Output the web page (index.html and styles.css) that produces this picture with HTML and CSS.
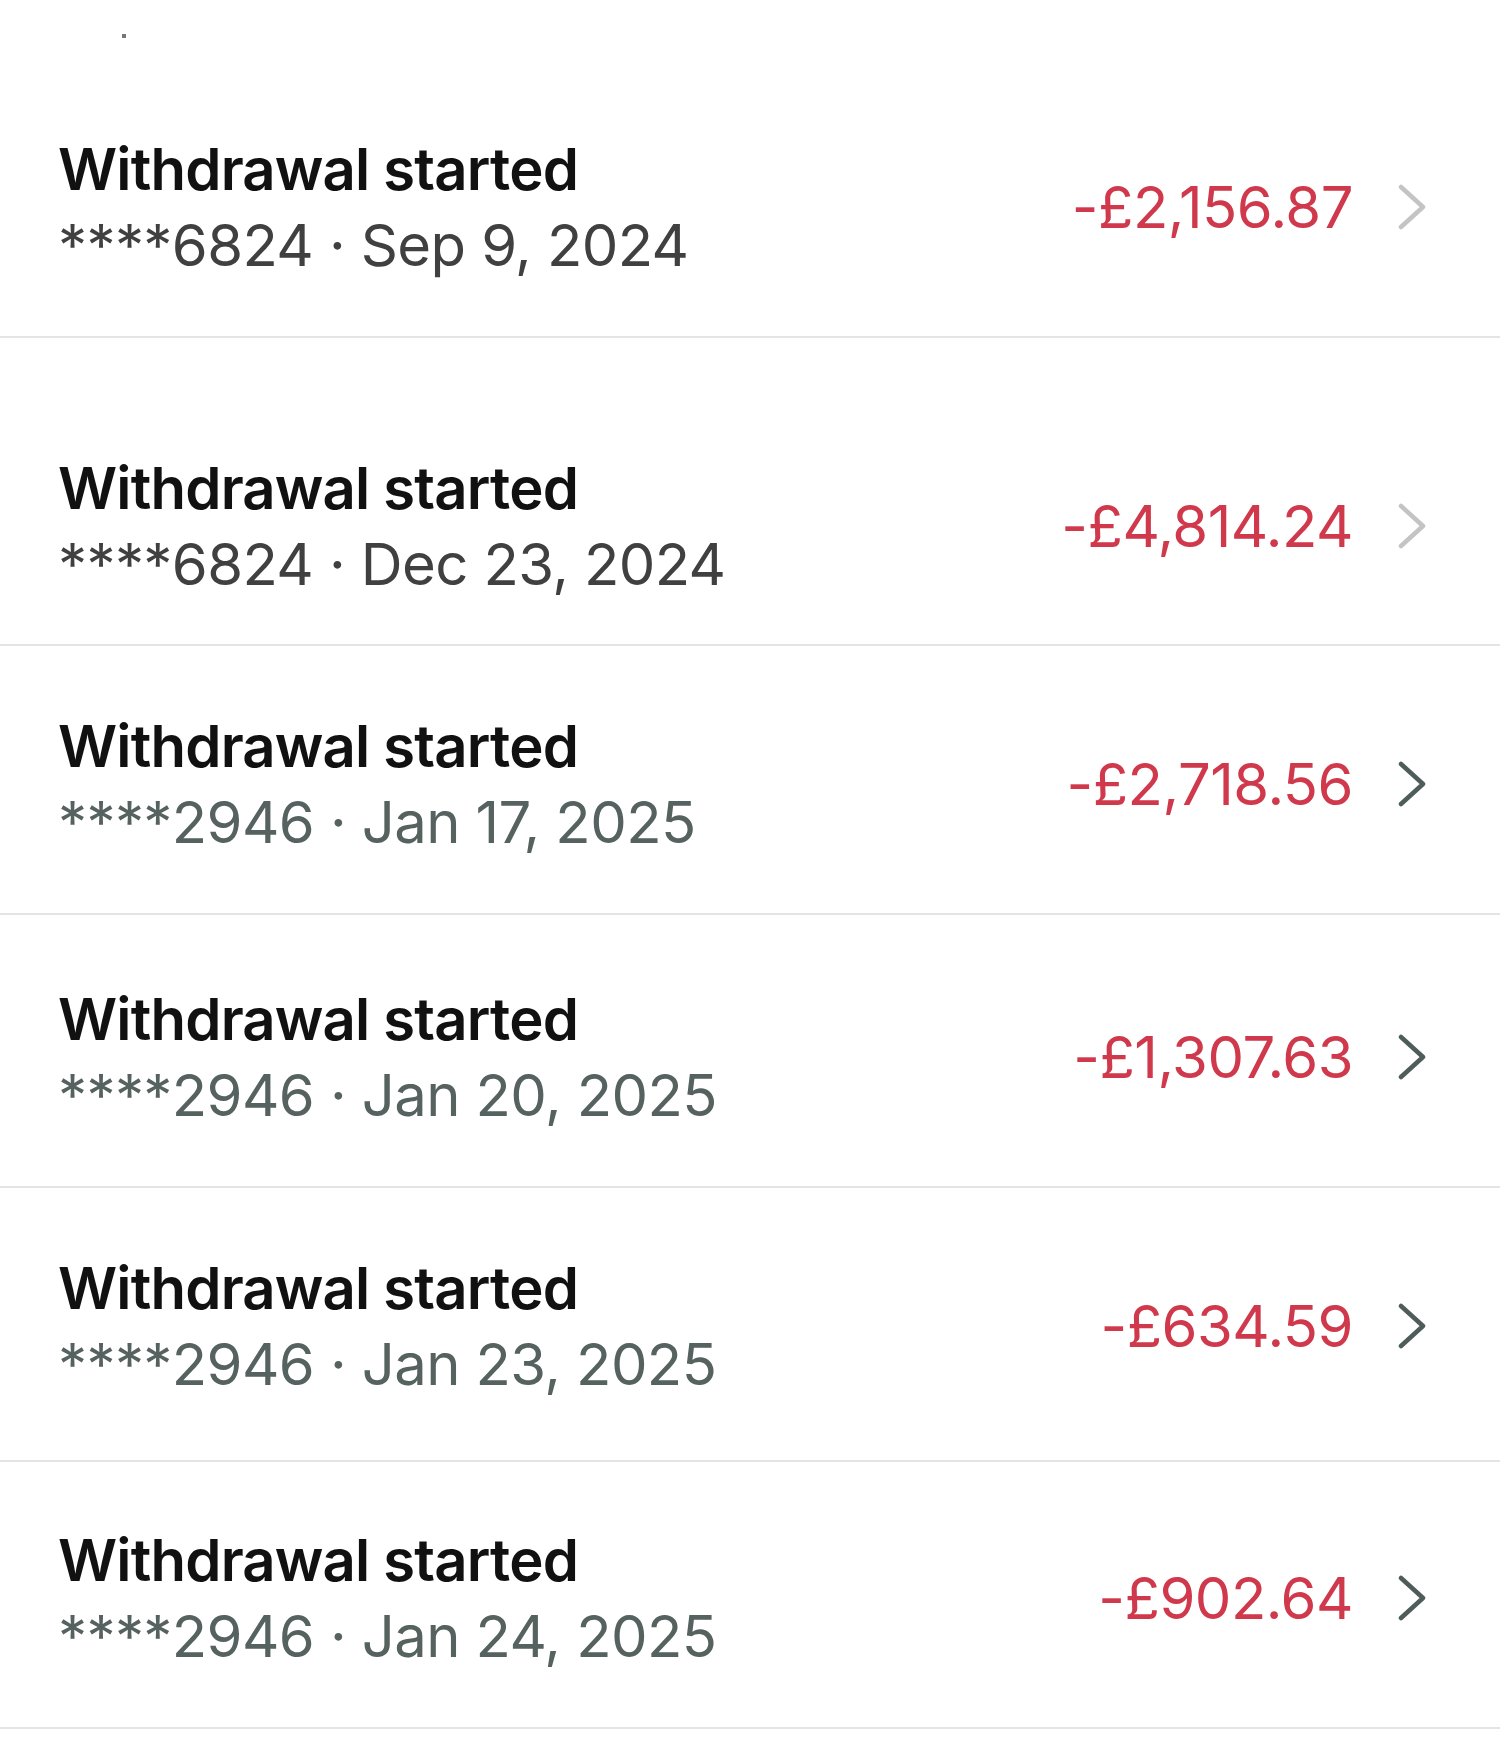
FILE: index.html
```html
<!DOCTYPE html>
<html lang="en">
<head>
    <meta charset="UTF-8">
    <meta name="viewport" content="width=device-width, initial-scale=1.0">
    <title>Activity</title>
    <link rel="stylesheet" href="styles.css">
</head>
<body>
    <div class="top-bar">
        <span class="dot"></span>
    </div>

    <ul class="tx-list">
        <li class="tx-row">
            <div class="tx-info">
                <div class="tx-title">Withdrawal started</div>
                <div class="tx-meta">****6824 · Sep 9, 2024</div>
            </div>
            <div class="tx-side">
                <span class="tx-amount">-£2,156.87</span>
                <svg class="chevron faded" viewBox="0 0 28 46"><polyline points="3,3 25,23 3,43"/></svg>
            </div>
        </li>
        <li class="tx-row tall">
            <div class="tx-info">
                <div class="tx-title">Withdrawal started</div>
                <div class="tx-meta">****6824 · Dec 23, 2024</div>
            </div>
            <div class="tx-side">
                <span class="tx-amount">-£4,814.24</span>
                <svg class="chevron faded" viewBox="0 0 28 46"><polyline points="3,3 25,23 3,43"/></svg>
            </div>
        </li>
        <li class="tx-row">
            <div class="tx-info">
                <div class="tx-title">Withdrawal started</div>
                <div class="tx-meta slate">****2946 · Jan 17, 2025</div>
            </div>
            <div class="tx-side">
                <span class="tx-amount">-£2,718.56</span>
                <svg class="chevron" viewBox="0 0 28 46"><polyline points="3,3 25,23 3,43"/></svg>
            </div>
        </li>
        <li class="tx-row pad-top">
            <div class="tx-info">
                <div class="tx-title">Withdrawal started</div>
                <div class="tx-meta slate">****2946 · Jan 20, 2025</div>
            </div>
            <div class="tx-side">
                <span class="tx-amount">-£1,307.63</span>
                <svg class="chevron" viewBox="0 0 28 46"><polyline points="3,3 25,23 3,43"/></svg>
            </div>
        </li>
        <li class="tx-row pad-bottom">
            <div class="tx-info">
                <div class="tx-title">Withdrawal started</div>
                <div class="tx-meta slate">****2946 · Jan 23, 2025</div>
            </div>
            <div class="tx-side">
                <span class="tx-amount">-£634.59</span>
                <svg class="chevron" viewBox="0 0 28 46"><polyline points="3,3 25,23 3,43"/></svg>
            </div>
        </li>
        <li class="tx-row snug">
            <div class="tx-info">
                <div class="tx-title">Withdrawal started</div>
                <div class="tx-meta slate">****2946 · Jan 24, 2025</div>
            </div>
            <div class="tx-side">
                <span class="tx-amount">-£902.64</span>
                <svg class="chevron" viewBox="0 0 28 46"><polyline points="3,3 25,23 3,43"/></svg>
            </div>
        </li>
    </ul>
</body>
</html>
```

FILE: styles.css
```css
body {
    margin: 0;
    background-color: #ffffff;
    font-family: Inter, "Noto Sans", Arial, sans-serif;
    color: #111111;
}
.top-bar {
    height: 69px;
    position: relative;
}
.dot {
    position: absolute;
    left: 122px;
    top: 34px;
    width: 4px;
    height: 4px;
    background-color: #777777;
}
.tx-list {
    list-style: none;
    margin: 0;
    padding: 0;
}
.tx-row {
    display: flex;
    justify-content: space-between;
    align-items: center;
    padding: 62px 74px 53px 58px;
    border-bottom: 2px solid #e4e4e4;
}
.tx-row.tall {
    padding-top: 112px;
    padding-bottom: 42px;
}
.tx-row.pad-top {
    padding-top: 66px;
}
.tx-row.pad-bottom {
    padding-bottom: 58px;
}
.tx-row.snug {
    padding-top: 60px;
}
.tx-title {
    font-size: 58px;
    line-height: 76px;
    font-weight: 600;
    letter-spacing: -0.8px;
}
.tx-meta {
    font-size: 58px;
    line-height: 76px;
    letter-spacing: -0.6px;
    color: #404040;
}
.tx-meta.slate {
    color: #56625f;
}
.tx-side {
    display: flex;
    align-items: center;
    gap: 45px;
}
.tx-amount {
    font-size: 58px;
    letter-spacing: -0.5px;
    color: #d0384c;
}
.chevron {
    width: 28px;
    height: 46px;
    fill: none;
    stroke: #4e5c5a;
    stroke-width: 4.5;
    stroke-linecap: round;
    stroke-linejoin: round;
}
.chevron.faded {
    stroke: #c4c4c4;
}
```
